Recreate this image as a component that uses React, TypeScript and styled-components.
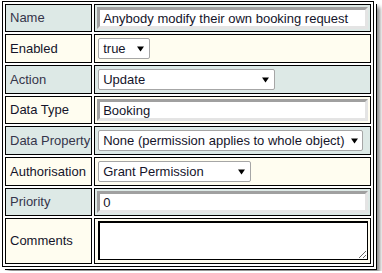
import React from 'react';
import styled, { createGlobalStyle } from 'styled-components';

const GlobalStyle = createGlobalStyle`
    body {
        margin: 0;
        background: #ffffff;
        font-family: 'Liberation Sans', Arial, sans-serif;
    }
`;

type Tone = 'teal' | 'cream';

const tones: Record<Tone, string> = {
    teal: '#dde9e6',
    cream: '#fffdf0',
};

const Frame = styled.div`
    display: inline-block;
    margin: 1px 0 0 2px;
    box-shadow: 2px 2px 0 #ffffff, 3px 3px 0 #000000, 6px 6px 4px #8a8a8a;
`;

const Table = styled.table`
    border: 1px solid #000;
    border-spacing: 2px;
    border-collapse: separate;
    background: #ffffff;
`;

const Cell = styled.td<{ tone: Tone }>`
    border: 1px solid #000;
    background: ${props => tones[props.tone]};
    padding: 2px;
    vertical-align: middle;
    font-size: 13px;
    line-height: 16px;
`;

const LabelCell = styled(Cell)`
    width: 0;
    padding: 2px 1px 2px 4px;
    color: ${props => (props.tone === 'teal' ? '#35354a' : '#14142a')};
    white-space: nowrap;
`;

const TextInput = styled.input`
    box-sizing: border-box;
    display: block;
    width: 271px;
    height: 22px;
    margin: 0;
    padding: 1px 3px;
    border: 3px solid;
    border-color: #a0a0a0 #e4e4e4 #e4e4e4 #a0a0a0;
    background: #ffffff;
    font-family: 'Liberation Sans', Arial, sans-serif;
    font-size: 13px;
    color: #14142a;
    outline: none;
`;

const Dropdown = styled.div<{ width: number }>`
    box-sizing: border-box;
    display: flex;
    align-items: center;
    justify-content: space-between;
    width: ${props => props.width}px;
    height: 21px;
    margin: 1px 0 1px 1px;
    padding: 0 5px 0 4px;
    border: 1px solid #a6a6a6;
    border-radius: 2px;
    background: #ffffff;
    font-size: 13px;
    color: #14142a;
    white-space: nowrap;
`;

const Arrow = styled.svg`
    flex: none;
    margin-left: 6px;
`;

const TextArea = styled.textarea`
    box-sizing: border-box;
    display: block;
    width: 270px;
    height: 39px;
    margin: 0 0 1px 1px;
    border: 1px solid #000;
    box-shadow: inset 1px 1px 0 #000;
    background: #ffffff;
    font-family: 'Liberation Sans', Arial, sans-serif;
    font-size: 13px;
    resize: both;
    outline: none;
`;

const Select: React.FC<{ value: string; width: number }> = ({ value, width }) => (
    <Dropdown width={width}>
        <span>{value}</span>
        <Arrow width="7" height="7" viewBox="0 0 7 7">
            <path d="M0 1.5 H7 L3.5 6.5 Z" fill="#000" />
        </Arrow>
    </Dropdown>
);

export default function App() {
    return (
        <>
            <GlobalStyle />
            <Frame>
                <Table>
                    <tbody>
                        <tr>
                            <LabelCell tone="teal">Name</LabelCell>
                            <Cell tone="teal">
                                <TextInput defaultValue="Anybody modify their own booking request" />
                            </Cell>
                        </tr>
                        <tr>
                            <LabelCell tone="cream">Enabled</LabelCell>
                            <Cell tone="cream">
                                <Select value="true" width={52} />
                            </Cell>
                        </tr>
                        <tr>
                            <LabelCell tone="teal">Action</LabelCell>
                            <Cell tone="teal">
                                <Select value="Update" width={177} />
                            </Cell>
                        </tr>
                        <tr>
                            <LabelCell tone="cream">Data Type</LabelCell>
                            <Cell tone="cream">
                                <TextInput defaultValue="Booking" />
                            </Cell>
                        </tr>
                        <tr>
                            <LabelCell tone="teal">Data Property</LabelCell>
                            <Cell tone="teal">
                                <Select value="None (permission applies to whole object)" width={265} />
                            </Cell>
                        </tr>
                        <tr>
                            <LabelCell tone="cream">Authorisation</LabelCell>
                            <Cell tone="cream">
                                <Select value="Grant Permission" width={153} />
                            </Cell>
                        </tr>
                        <tr>
                            <LabelCell tone="teal">Priority</LabelCell>
                            <Cell tone="teal">
                                <TextInput defaultValue="0" />
                            </Cell>
                        </tr>
                        <tr>
                            <LabelCell tone="cream">Comments</LabelCell>
                            <Cell tone="cream">
                                <TextArea />
                            </Cell>
                        </tr>
                    </tbody>
                </Table>
            </Frame>
        </>
    );
}
